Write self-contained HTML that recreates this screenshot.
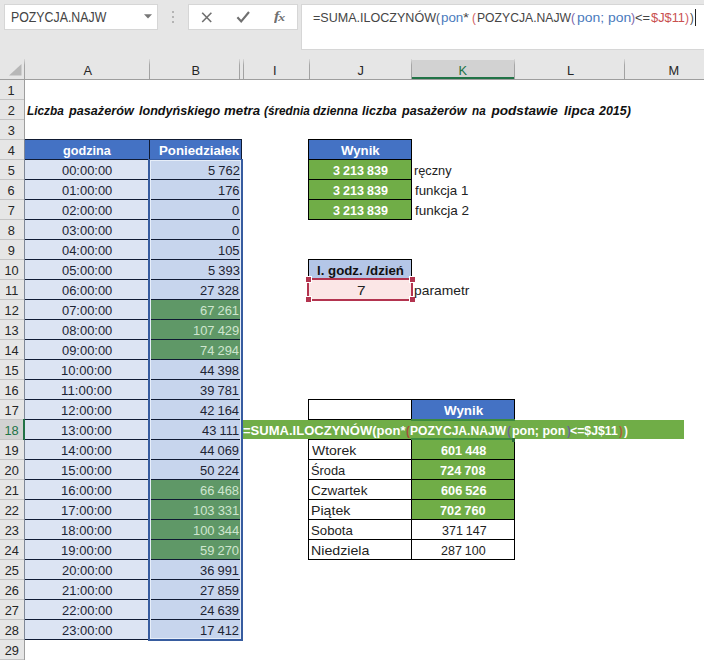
<!DOCTYPE html>
<html><head><meta charset="utf-8"><title>sheet</title>
<style>
*{box-sizing:border-box;margin:0;padding:0}
html,body{width:704px;height:660px;overflow:hidden;background:#fff}
body{font-family:"Liberation Sans",sans-serif;font-size:13px;color:#222;position:relative}
div{position:absolute;white-space:nowrap}
.top{left:0;top:0;width:704px;height:80px;background:#e6e6e6}
.box{background:#fff;border:1px solid #d6d6d6}
.hline{background:#9e9e9e;height:1px}
.vsep{background:linear-gradient(#d8d8d8,#a6a6a6 30%,#a0a0a0);width:1px;top:59px;height:20px}
.rh{left:0;width:24px;height:20px;line-height:21px;text-align:center;font-size:12.5px;color:#262626;background:#e6e6e6;border-bottom:1px solid #c4c4c4}
</style></head>
<body>
<div class="top"></div>
<div class="box" style="left:4px;top:4px;width:154px;height:26px"></div>
<div style="left:10.69px;top:8px;height:20px;line-height:20px;font-size:13.8px;color:#444;transform:translateY(0.20px) scaleX(0.8946);transform-origin:0 0;">POZYCJA.NAJW</div>
<svg style="position:absolute;left:144px;top:14px" width="8" height="5" viewBox="0 0 8 5"><path d="M0 0.3h8L4 4.6z" fill="#777"/></svg>
<div style="left:172px;top:11px;width:2px;height:2px;background:#b4b4b4"></div>
<div style="left:172px;top:16px;width:2px;height:2px;background:#b4b4b4"></div>
<div style="left:172px;top:21px;width:2px;height:2px;background:#b4b4b4"></div>
<div class="box" style="left:188px;top:4px;width:110px;height:26px"></div>
<svg style="position:absolute;left:200px;top:11px" width="14" height="13" viewBox="0 0 14 13"><path d="M2.2 1.7l9 9.3M11.4 1.7l-9.2 9.3" stroke="#707070" stroke-width="1.6" fill="none"/></svg>
<svg style="position:absolute;left:236px;top:10px" width="15" height="14" viewBox="0 0 15 14"><path d="M1.4 7.2l3.8 4.3L13 2" stroke="#707070" stroke-width="2.1" fill="none"/></svg>
<div style="left:273.5px;top:4.6px;height:22px;line-height:22px;font-family:'Liberation Serif',serif;font-style:italic;font-weight:bold;font-size:13px;color:#707070;transform:scaleX(1.25);transform-origin:0 0">f<span style="font-size:11px;position:relative;top:1px;left:-1px">x</span></div>
<div class="box" style="left:301px;top:4px;width:410px;height:46px"></div>
<div style="left:312.70px;top:8px;height:20px;line-height:20px;font-size:13.1px;color:#454545;transform:translateY(0.10px) scaleX(0.9581);transform-origin:0 0;">=SUMA.ILOCZYNÓW</div>
<div style="left:436.18px;top:8px;height:20px;line-height:20px;font-size:13.1px;color:#3d4f6e;transform:translateY(0.10px) scaleX(0.8896);transform-origin:0 0;">(</div>
<div style="left:441.34px;top:8px;height:20px;line-height:20px;font-size:13.1px;color:#4a7bbd;transform:translateY(0.10px) scaleX(1.0211);transform-origin:0 0;">pon</div>
<div style="left:463.15px;top:8px;height:20px;line-height:20px;font-size:13.1px;color:#454545;transform:translateY(0.10px) scaleX(1.1728);transform-origin:0 0;">*</div>
<div style="left:471.68px;top:8px;height:20px;line-height:20px;font-size:13.1px;color:#cf5a60;transform:translateY(0.10px) scaleX(0.8896);transform-origin:0 0;">(</div>
<div style="left:477.00px;top:8px;height:20px;line-height:20px;font-size:13.1px;color:#454545;transform:translateY(0.10px) scaleX(0.9295);transform-origin:0 0;">POZYCJA.NAJW</div>
<div style="left:571.49px;top:8px;height:20px;line-height:20px;font-size:13.1px;color:#7d62a8;transform:translateY(0.10px) scaleX(0.9327);transform-origin:0 0;">(</div>
<div style="left:576.61px;top:8px;height:20px;line-height:20px;font-size:13.1px;color:#4a7bbd;transform:translateY(0.10px) scaleX(1.0647);transform-origin:0 0;">pon; pon</div>
<div style="left:631.19px;top:8px;height:20px;line-height:20px;font-size:13.1px;color:#7d62a8;transform:translateY(0.10px) scaleX(0.9327);transform-origin:0 0;">)</div>
<div style="left:635.37px;top:8px;height:20px;line-height:20px;font-size:13.1px;color:#454545;transform:translateY(0.10px) scaleX(0.9810);transform-origin:0 0;">&lt;=</div>
<div style="left:650.87px;top:8px;height:20px;line-height:20px;font-size:13.1px;color:#c9504f;transform:translateY(0.10px) scaleX(0.9792);transform-origin:0 0;">$J$11</div>
<div style="left:685.44px;top:8px;height:20px;line-height:20px;font-size:13.1px;color:#cf5a60;transform:translateY(0.10px) scaleX(0.9327);transform-origin:0 0;">)</div>
<div style="left:689.94px;top:8px;height:20px;line-height:20px;font-size:13.1px;color:#454545;transform:translateY(0.10px) scaleX(0.8609);transform-origin:0 0;">)</div>
<div style="left:694.5px;top:9px;width:1px;height:17px;background:#222"></div>
<div style="left:411px;top:60px;width:104px;height:19px;background:#d2d2d2"></div>
<div style="left:411px;top:77px;width:104px;height:2px;background:#217346"></div>
<div style="left:83.53px;top:61px;height:20px;line-height:20px;font-size:12.8px;color:#262626;transform:translateY(0.30px) scaleX(1.0000);transform-origin:0 0;">A</div>
<div style="left:191.54px;top:61px;height:20px;line-height:20px;font-size:12.8px;color:#262626;transform:translateY(0.30px) scaleX(1.0000);transform-origin:0 0;">B</div>
<div style="left:273.02px;top:61px;height:20px;line-height:20px;font-size:12.8px;color:#262626;transform:translateY(0.30px) scaleX(1.0000);transform-origin:0 0;">I</div>
<div style="left:357.43px;top:61px;height:20px;line-height:20px;font-size:12.8px;color:#262626;transform:translateY(0.30px) scaleX(1.0000);transform-origin:0 0;">J</div>
<div style="left:458.53px;top:61px;height:20px;line-height:20px;font-size:12.8px;color:#217346;transform:translateY(0.30px) scaleX(1.0000);transform-origin:0 0;">K</div>
<div style="left:566.88px;top:61px;height:20px;line-height:20px;font-size:12.8px;color:#262626;transform:translateY(0.30px) scaleX(1.0000);transform-origin:0 0;">L</div>
<div style="left:668.57px;top:61px;height:20px;line-height:20px;font-size:12.8px;color:#262626;transform:translateY(0.30px) scaleX(1.0000);transform-origin:0 0;">M</div>
<div class="vsep" style="left:24px"></div>
<div class="vsep" style="left:149px"></div>
<div class="vsep" style="left:239px"></div>
<div class="vsep" style="left:243px"></div>
<div class="vsep" style="left:309px"></div>
<div class="vsep" style="left:411px"></div>
<div class="vsep" style="left:514px"></div>
<div class="vsep" style="left:624px"></div>
<div class="hline" style="left:0;top:79px;width:704px"></div>
<svg style="position:absolute;left:9px;top:64px" width="13" height="12" viewBox="0 0 13 12"><path d="M12.5 0v11.5H0z" fill="#b7b7b7"/></svg>
<div class="rh" style="top:80px"></div>
<div style="left:7.46px;top:80px;height:20px;line-height:20px;font-size:12.8px;color:#262626;transform:translateY(0.60px) scaleX(1.0000);transform-origin:0 0;">1</div>
<div class="rh" style="top:100px"></div>
<div style="left:7.64px;top:100px;height:20px;line-height:20px;font-size:12.8px;color:#262626;transform:translateY(0.60px) scaleX(1.0000);transform-origin:0 0;">2</div>
<div class="rh" style="top:120px"></div>
<div style="left:7.67px;top:120px;height:20px;line-height:20px;font-size:12.8px;color:#262626;transform:translateY(0.60px) scaleX(1.0000);transform-origin:0 0;">3</div>
<div class="rh" style="top:140px"></div>
<div style="left:7.69px;top:140px;height:20px;line-height:20px;font-size:12.8px;color:#262626;transform:translateY(0.60px) scaleX(1.0000);transform-origin:0 0;">4</div>
<div class="rh" style="top:160px"></div>
<div style="left:7.65px;top:160px;height:20px;line-height:20px;font-size:12.8px;color:#262626;transform:translateY(0.60px) scaleX(1.0000);transform-origin:0 0;">5</div>
<div class="rh" style="top:180px"></div>
<div style="left:7.60px;top:180px;height:20px;line-height:20px;font-size:12.8px;color:#262626;transform:translateY(0.60px) scaleX(1.0000);transform-origin:0 0;">6</div>
<div class="rh" style="top:200px"></div>
<div style="left:7.64px;top:200px;height:20px;line-height:20px;font-size:12.8px;color:#262626;transform:translateY(0.60px) scaleX(1.0000);transform-origin:0 0;">7</div>
<div class="rh" style="top:220px"></div>
<div style="left:7.64px;top:220px;height:20px;line-height:20px;font-size:12.8px;color:#262626;transform:translateY(0.60px) scaleX(1.0000);transform-origin:0 0;">8</div>
<div class="rh" style="top:240px"></div>
<div style="left:7.65px;top:240px;height:20px;line-height:20px;font-size:12.8px;color:#262626;transform:translateY(0.60px) scaleX(1.0000);transform-origin:0 0;">9</div>
<div class="rh" style="top:260px"></div>
<div style="left:4.44px;top:260px;height:20px;line-height:20px;font-size:12.8px;color:#262626;transform:translateY(0.60px) scaleX(1.0000);transform-origin:0 0;">10</div>
<div class="rh" style="top:280px"></div>
<div style="left:4.98px;top:280px;height:20px;line-height:20px;font-size:12.8px;color:#262626;transform:translateY(0.60px) scaleX(1.0000);transform-origin:0 0;">11</div>
<div class="rh" style="top:300px"></div>
<div style="left:4.52px;top:300px;height:20px;line-height:20px;font-size:12.8px;color:#262626;transform:translateY(0.60px) scaleX(1.0000);transform-origin:0 0;">12</div>
<div class="rh" style="top:320px"></div>
<div style="left:4.47px;top:320px;height:20px;line-height:20px;font-size:12.8px;color:#262626;transform:translateY(0.60px) scaleX(1.0000);transform-origin:0 0;">13</div>
<div class="rh" style="top:340px"></div>
<div style="left:4.38px;top:340px;height:20px;line-height:20px;font-size:12.8px;color:#262626;transform:translateY(0.60px) scaleX(1.0000);transform-origin:0 0;">14</div>
<div class="rh" style="top:360px"></div>
<div style="left:4.46px;top:360px;height:20px;line-height:20px;font-size:12.8px;color:#262626;transform:translateY(0.60px) scaleX(1.0000);transform-origin:0 0;">15</div>
<div class="rh" style="top:380px"></div>
<div style="left:4.47px;top:380px;height:20px;line-height:20px;font-size:12.8px;color:#262626;transform:translateY(0.60px) scaleX(1.0000);transform-origin:0 0;">16</div>
<div class="rh" style="top:400px"></div>
<div style="left:4.52px;top:400px;height:20px;line-height:20px;font-size:12.8px;color:#262626;transform:translateY(0.60px) scaleX(1.0000);transform-origin:0 0;">17</div>
<div class="rh" style="top:420px;background:#d2d2d2"></div>
<div style="left:4.47px;top:420px;height:20px;line-height:20px;font-size:12.8px;color:#217346;transform:translateY(0.60px) scaleX(1.0000);transform-origin:0 0;">18</div>
<div class="rh" style="top:440px"></div>
<div style="left:4.50px;top:440px;height:20px;line-height:20px;font-size:12.8px;color:#262626;transform:translateY(0.60px) scaleX(1.0000);transform-origin:0 0;">19</div>
<div class="rh" style="top:460px"></div>
<div style="left:4.61px;top:460px;height:20px;line-height:20px;font-size:12.8px;color:#262626;transform:translateY(0.60px) scaleX(1.0000);transform-origin:0 0;">20</div>
<div class="rh" style="top:480px"></div>
<div style="left:4.67px;top:480px;height:20px;line-height:20px;font-size:12.8px;color:#262626;transform:translateY(0.60px) scaleX(1.0000);transform-origin:0 0;">21</div>
<div class="rh" style="top:500px"></div>
<div style="left:4.68px;top:500px;height:20px;line-height:20px;font-size:12.8px;color:#262626;transform:translateY(0.60px) scaleX(1.0000);transform-origin:0 0;">22</div>
<div class="rh" style="top:520px"></div>
<div style="left:4.64px;top:520px;height:20px;line-height:20px;font-size:12.8px;color:#262626;transform:translateY(0.60px) scaleX(1.0000);transform-origin:0 0;">23</div>
<div class="rh" style="top:540px"></div>
<div style="left:4.55px;top:540px;height:20px;line-height:20px;font-size:12.8px;color:#262626;transform:translateY(0.60px) scaleX(1.0000);transform-origin:0 0;">24</div>
<div class="rh" style="top:560px"></div>
<div style="left:4.63px;top:560px;height:20px;line-height:20px;font-size:12.8px;color:#262626;transform:translateY(0.60px) scaleX(1.0000);transform-origin:0 0;">25</div>
<div class="rh" style="top:580px"></div>
<div style="left:4.64px;top:580px;height:20px;line-height:20px;font-size:12.8px;color:#262626;transform:translateY(0.60px) scaleX(1.0000);transform-origin:0 0;">26</div>
<div class="rh" style="top:600px"></div>
<div style="left:4.68px;top:600px;height:20px;line-height:20px;font-size:12.8px;color:#262626;transform:translateY(0.60px) scaleX(1.0000);transform-origin:0 0;">27</div>
<div class="rh" style="top:620px"></div>
<div style="left:4.64px;top:620px;height:20px;line-height:20px;font-size:12.8px;color:#262626;transform:translateY(0.60px) scaleX(1.0000);transform-origin:0 0;">28</div>
<div class="rh" style="top:640px"></div>
<div style="left:4.66px;top:640px;height:20px;line-height:20px;font-size:12.8px;color:#262626;transform:translateY(0.60px) scaleX(1.0000);transform-origin:0 0;">29</div>
<div style="left:24px;top:80px;width:1px;height:580px;background:#9e9e9e"></div>
<div style="left:27.30px;top:100px;height:20px;line-height:20px;font-size:13.6px;font-weight:bold;font-style:italic;color:#111;transform:translateY(0.90px) scaleX(0.8694);transform-origin:0 0;">Liczba</div>
<div style="left:69.03px;top:100px;height:20px;line-height:20px;font-size:13.6px;font-weight:bold;font-style:italic;color:#111;transform:translateY(0.90px) scaleX(0.9317);transform-origin:0 0;">pasażerów</div>
<div style="left:139.29px;top:100px;height:20px;line-height:20px;font-size:13.6px;font-weight:bold;font-style:italic;color:#111;transform:translateY(0.90px) scaleX(0.9253);transform-origin:0 0;">londyńskiego</div>
<div style="left:224.27px;top:100px;height:20px;line-height:20px;font-size:13.6px;font-weight:bold;font-style:italic;color:#111;transform:translateY(0.90px) scaleX(0.9751);transform-origin:0 0;">metra</div>
<div style="left:263.58px;top:100px;height:20px;line-height:20px;font-size:13.6px;font-weight:bold;font-style:italic;color:#111;transform:translateY(0.90px) scaleX(0.8651);transform-origin:0 0;">(średnia</div>
<div style="left:312.66px;top:100px;height:20px;line-height:20px;font-size:13.6px;font-weight:bold;font-style:italic;color:#111;transform:translateY(0.90px) scaleX(0.8875);transform-origin:0 0;">dzienna</div>
<div style="left:362.04px;top:100px;height:20px;line-height:20px;font-size:13.6px;font-weight:bold;font-style:italic;color:#111;transform:translateY(0.90px) scaleX(0.9215);transform-origin:0 0;">liczba</div>
<div style="left:402.28px;top:100px;height:20px;line-height:20px;font-size:13.6px;font-weight:bold;font-style:italic;color:#111;transform:translateY(0.90px) scaleX(0.9282);transform-origin:0 0;">pasażerów</div>
<div style="left:472.12px;top:100px;height:20px;line-height:20px;font-size:13.6px;font-weight:bold;font-style:italic;color:#111;transform:translateY(0.90px) scaleX(0.8600);transform-origin:0 0;">na</div>
<div style="left:491.46px;top:100px;height:20px;line-height:20px;font-size:13.6px;font-weight:bold;font-style:italic;color:#111;transform:translateY(0.90px) scaleX(1.0000);transform-origin:0 0;">podstawie</div>
<div style="left:564.27px;top:100px;height:20px;line-height:20px;font-size:13.6px;font-weight:bold;font-style:italic;color:#111;transform:translateY(0.90px) scaleX(0.9879);transform-origin:0 0;">lipca</div>
<div style="left:598.95px;top:100px;height:20px;line-height:20px;font-size:13.6px;font-weight:bold;font-style:italic;color:#111;transform:translateY(0.90px) scaleX(0.9173);transform-origin:0 0;">2015)</div>
<div style="left:25px;top:139px;width:217px;height:21px;background:#0f1a33"></div>
<div style="left:25px;top:140px;width:124px;height:19px;background:#4472c4"></div>
<div style="left:150px;top:140px;width:91px;height:19px;background:#4472c4"></div>
<div style="left:25px;top:160px;width:124px;height:480px;background:#dce4f3"></div>
<div style="left:25px;top:179px;width:124px;height:1px;background:#0f1a33"></div>
<div style="left:25px;top:199px;width:124px;height:1px;background:#0f1a33"></div>
<div style="left:25px;top:219px;width:124px;height:1px;background:#0f1a33"></div>
<div style="left:25px;top:239px;width:124px;height:1px;background:#0f1a33"></div>
<div style="left:25px;top:259px;width:124px;height:1px;background:#0f1a33"></div>
<div style="left:25px;top:279px;width:124px;height:1px;background:#0f1a33"></div>
<div style="left:25px;top:299px;width:124px;height:1px;background:#0f1a33"></div>
<div style="left:25px;top:319px;width:124px;height:1px;background:#0f1a33"></div>
<div style="left:25px;top:339px;width:124px;height:1px;background:#0f1a33"></div>
<div style="left:25px;top:359px;width:124px;height:1px;background:#0f1a33"></div>
<div style="left:25px;top:379px;width:124px;height:1px;background:#0f1a33"></div>
<div style="left:25px;top:399px;width:124px;height:1px;background:#0f1a33"></div>
<div style="left:25px;top:419px;width:124px;height:1px;background:#0f1a33"></div>
<div style="left:25px;top:439px;width:124px;height:1px;background:#0f1a33"></div>
<div style="left:25px;top:459px;width:124px;height:1px;background:#0f1a33"></div>
<div style="left:25px;top:479px;width:124px;height:1px;background:#0f1a33"></div>
<div style="left:25px;top:499px;width:124px;height:1px;background:#0f1a33"></div>
<div style="left:25px;top:519px;width:124px;height:1px;background:#0f1a33"></div>
<div style="left:25px;top:539px;width:124px;height:1px;background:#0f1a33"></div>
<div style="left:25px;top:559px;width:124px;height:1px;background:#0f1a33"></div>
<div style="left:25px;top:579px;width:124px;height:1px;background:#0f1a33"></div>
<div style="left:25px;top:599px;width:124px;height:1px;background:#0f1a33"></div>
<div style="left:25px;top:619px;width:124px;height:1px;background:#0f1a33"></div>
<div style="left:25px;top:639px;width:124px;height:1px;background:#0f1a33"></div>
<div style="left:148px;top:159px;width:95px;height:482px;background:#375c9f"></div>
<div style="left:150px;top:160px;width:91px;height:479px;background:#e6edf8"></div>
<div style="left:151px;top:161px;width:89px;height:477px;background:#c7d5ed"></div>
<div style="left:151px;top:480px;width:89px;height:19px;background:#5f9867"></div>
<div style="left:151px;top:500px;width:89px;height:19px;background:#5f9867"></div>
<div style="left:151px;top:520px;width:89px;height:19px;background:#5f9867"></div>
<div style="left:151px;top:540px;width:89px;height:19px;background:#5f9867"></div>
<div style="left:151px;top:300px;width:89px;height:19px;background:#5f9867"></div>
<div style="left:151px;top:320px;width:89px;height:19px;background:#5f9867"></div>
<div style="left:151px;top:340px;width:89px;height:19px;background:#5f9867"></div>
<div style="left:151px;top:179px;width:89px;height:1px;background:#0f1a33"></div>
<div style="left:151px;top:199px;width:89px;height:1px;background:#0f1a33"></div>
<div style="left:151px;top:219px;width:89px;height:1px;background:#0f1a33"></div>
<div style="left:151px;top:239px;width:89px;height:1px;background:#0f1a33"></div>
<div style="left:151px;top:259px;width:89px;height:1px;background:#0f1a33"></div>
<div style="left:151px;top:279px;width:89px;height:1px;background:#0f1a33"></div>
<div style="left:151px;top:299px;width:89px;height:1px;background:#0f1a33"></div>
<div style="left:151px;top:319px;width:89px;height:1px;background:#0f1a33"></div>
<div style="left:151px;top:339px;width:89px;height:1px;background:#0f1a33"></div>
<div style="left:151px;top:359px;width:89px;height:1px;background:#0f1a33"></div>
<div style="left:151px;top:379px;width:89px;height:1px;background:#0f1a33"></div>
<div style="left:151px;top:399px;width:89px;height:1px;background:#0f1a33"></div>
<div style="left:151px;top:419px;width:89px;height:1px;background:#0f1a33"></div>
<div style="left:151px;top:439px;width:89px;height:1px;background:#0f1a33"></div>
<div style="left:151px;top:459px;width:89px;height:1px;background:#0f1a33"></div>
<div style="left:151px;top:479px;width:89px;height:1px;background:#0f1a33"></div>
<div style="left:151px;top:499px;width:89px;height:1px;background:#0f1a33"></div>
<div style="left:151px;top:519px;width:89px;height:1px;background:#0f1a33"></div>
<div style="left:151px;top:539px;width:89px;height:1px;background:#0f1a33"></div>
<div style="left:151px;top:559px;width:89px;height:1px;background:#0f1a33"></div>
<div style="left:151px;top:579px;width:89px;height:1px;background:#0f1a33"></div>
<div style="left:151px;top:599px;width:89px;height:1px;background:#0f1a33"></div>
<div style="left:151px;top:619px;width:89px;height:1px;background:#0f1a33"></div>
<div style="left:24px;top:139px;width:1px;height:501px;background:#7f8796"></div>
<div style="left:62.88px;top:140px;height:20px;line-height:20px;font-size:13.6px;font-weight:bold;color:#fff;transform:translateY(0.80px) scaleX(0.9311);transform-origin:0 0;">godzina</div>
<div style="left:158.73px;top:140px;height:20px;line-height:20px;font-size:13.6px;font-weight:bold;color:#fff;transform:translateY(0.80px) scaleX(0.9742);transform-origin:0 0;">Poniedziałek</div>
<div style="left:61.80px;top:160px;height:20px;line-height:20px;font-size:13.4px;color:#1e2433;transform:translateY(0.70px) scaleX(0.9644);transform-origin:0 0;">00:00:00</div>
<div style="left:207.68px;top:160px;height:20px;line-height:20px;font-size:13.4px;color:#1e2433;transform:translateY(0.80px) scaleX(0.9650);transform-origin:0 0;word-spacing:-0.5px;">5 762</div>
<div style="left:61.80px;top:180px;height:20px;line-height:20px;font-size:13.4px;color:#1e2433;transform:translateY(0.70px) scaleX(0.9644);transform-origin:0 0;">01:00:00</div>
<div style="left:217.89px;top:180px;height:20px;line-height:20px;font-size:13.4px;color:#1e2433;transform:translateY(0.80px) scaleX(0.9650);transform-origin:0 0;word-spacing:-0.5px;">176</div>
<div style="left:61.80px;top:200px;height:20px;line-height:20px;font-size:13.4px;color:#1e2433;transform:translateY(0.70px) scaleX(0.9644);transform-origin:0 0;">02:00:00</div>
<div style="left:232.20px;top:200px;height:20px;line-height:20px;font-size:13.4px;color:#1e2433;transform:translateY(0.80px) scaleX(0.9650);transform-origin:0 0;word-spacing:-0.5px;">0</div>
<div style="left:61.80px;top:220px;height:20px;line-height:20px;font-size:13.4px;color:#1e2433;transform:translateY(0.70px) scaleX(0.9644);transform-origin:0 0;">03:00:00</div>
<div style="left:232.20px;top:220px;height:20px;line-height:20px;font-size:13.4px;color:#1e2433;transform:translateY(0.80px) scaleX(0.9650);transform-origin:0 0;word-spacing:-0.5px;">0</div>
<div style="left:61.80px;top:240px;height:20px;line-height:20px;font-size:13.4px;color:#1e2433;transform:translateY(0.70px) scaleX(0.9644);transform-origin:0 0;">04:00:00</div>
<div style="left:217.86px;top:240px;height:20px;line-height:20px;font-size:13.4px;color:#1e2433;transform:translateY(0.80px) scaleX(0.9650);transform-origin:0 0;word-spacing:-0.5px;">105</div>
<div style="left:61.80px;top:260px;height:20px;line-height:20px;font-size:13.4px;color:#1e2433;transform:translateY(0.70px) scaleX(0.9644);transform-origin:0 0;">05:00:00</div>
<div style="left:207.59px;top:260px;height:20px;line-height:20px;font-size:13.4px;color:#1e2433;transform:translateY(0.80px) scaleX(0.9650);transform-origin:0 0;word-spacing:-0.5px;">5 393</div>
<div style="left:61.80px;top:280px;height:20px;line-height:20px;font-size:13.4px;color:#1e2433;transform:translateY(0.70px) scaleX(0.9644);transform-origin:0 0;">06:00:00</div>
<div style="left:200.40px;top:280px;height:20px;line-height:20px;font-size:13.4px;color:#1e2433;transform:translateY(0.80px) scaleX(0.9650);transform-origin:0 0;word-spacing:-0.5px;">27 328</div>
<div style="left:61.80px;top:300px;height:20px;line-height:20px;font-size:13.4px;color:#1e2433;transform:translateY(0.70px) scaleX(0.9644);transform-origin:0 0;">07:00:00</div>
<div style="left:200.46px;top:300px;height:20px;line-height:20px;font-size:13.4px;color:#cfe6cf;transform:translateY(0.80px) scaleX(0.9650);transform-origin:0 0;word-spacing:-0.5px;">67 261</div>
<div style="left:61.80px;top:320px;height:20px;line-height:20px;font-size:13.4px;color:#1e2433;transform:translateY(0.70px) scaleX(0.9644);transform-origin:0 0;">08:00:00</div>
<div style="left:193.24px;top:320px;height:20px;line-height:20px;font-size:13.4px;color:#cfe6cf;transform:translateY(0.80px) scaleX(0.9650);transform-origin:0 0;word-spacing:-0.5px;">107 429</div>
<div style="left:61.80px;top:340px;height:20px;line-height:20px;font-size:13.4px;color:#1e2433;transform:translateY(0.70px) scaleX(0.9644);transform-origin:0 0;">09:00:00</div>
<div style="left:200.21px;top:340px;height:20px;line-height:20px;font-size:13.4px;color:#cfe6cf;transform:translateY(0.80px) scaleX(0.9650);transform-origin:0 0;word-spacing:-0.5px;">74 294</div>
<div style="left:61.31px;top:360px;height:20px;line-height:20px;font-size:13.4px;color:#1e2433;transform:translateY(0.70px) scaleX(0.9738);transform-origin:0 0;">10:00:00</div>
<div style="left:200.40px;top:360px;height:20px;line-height:20px;font-size:13.4px;color:#1e2433;transform:translateY(0.80px) scaleX(0.9650);transform-origin:0 0;word-spacing:-0.5px;">44 398</div>
<div style="left:61.29px;top:380px;height:20px;line-height:20px;font-size:13.4px;color:#1e2433;transform:translateY(0.70px) scaleX(0.9933);transform-origin:0 0;">11:00:00</div>
<div style="left:200.46px;top:380px;height:20px;line-height:20px;font-size:13.4px;color:#1e2433;transform:translateY(0.80px) scaleX(0.9650);transform-origin:0 0;word-spacing:-0.5px;">39 781</div>
<div style="left:61.31px;top:400px;height:20px;line-height:20px;font-size:13.4px;color:#1e2433;transform:translateY(0.70px) scaleX(0.9738);transform-origin:0 0;">12:00:00</div>
<div style="left:200.21px;top:400px;height:20px;line-height:20px;font-size:13.4px;color:#1e2433;transform:translateY(0.80px) scaleX(0.9650);transform-origin:0 0;word-spacing:-0.5px;">42 164</div>
<div style="left:61.31px;top:420px;height:20px;line-height:20px;font-size:13.4px;color:#1e2433;transform:translateY(0.70px) scaleX(0.9738);transform-origin:0 0;">13:00:00</div>
<div style="left:202.37px;top:420px;height:20px;line-height:20px;font-size:13.4px;color:#1e2433;transform:translateY(0.80px) scaleX(0.9650);transform-origin:0 0;word-spacing:-0.5px;">43 111</div>
<div style="left:61.31px;top:440px;height:20px;line-height:20px;font-size:13.4px;color:#1e2433;transform:translateY(0.70px) scaleX(0.9738);transform-origin:0 0;">14:00:00</div>
<div style="left:200.45px;top:440px;height:20px;line-height:20px;font-size:13.4px;color:#1e2433;transform:translateY(0.80px) scaleX(0.9650);transform-origin:0 0;word-spacing:-0.5px;">44 069</div>
<div style="left:61.31px;top:460px;height:20px;line-height:20px;font-size:13.4px;color:#1e2433;transform:translateY(0.70px) scaleX(0.9738);transform-origin:0 0;">15:00:00</div>
<div style="left:200.21px;top:460px;height:20px;line-height:20px;font-size:13.4px;color:#1e2433;transform:translateY(0.80px) scaleX(0.9650);transform-origin:0 0;word-spacing:-0.5px;">50 224</div>
<div style="left:61.31px;top:480px;height:20px;line-height:20px;font-size:13.4px;color:#1e2433;transform:translateY(0.70px) scaleX(0.9738);transform-origin:0 0;">16:00:00</div>
<div style="left:200.40px;top:480px;height:20px;line-height:20px;font-size:13.4px;color:#cfe6cf;transform:translateY(0.80px) scaleX(0.9650);transform-origin:0 0;word-spacing:-0.5px;">66 468</div>
<div style="left:61.31px;top:500px;height:20px;line-height:20px;font-size:13.4px;color:#1e2433;transform:translateY(0.70px) scaleX(0.9738);transform-origin:0 0;">17:00:00</div>
<div style="left:193.26px;top:500px;height:20px;line-height:20px;font-size:13.4px;color:#cfe6cf;transform:translateY(0.80px) scaleX(0.9650);transform-origin:0 0;word-spacing:-0.5px;">103 331</div>
<div style="left:61.31px;top:520px;height:20px;line-height:20px;font-size:13.4px;color:#1e2433;transform:translateY(0.70px) scaleX(0.9738);transform-origin:0 0;">18:00:00</div>
<div style="left:193.01px;top:520px;height:20px;line-height:20px;font-size:13.4px;color:#cfe6cf;transform:translateY(0.80px) scaleX(0.9650);transform-origin:0 0;word-spacing:-0.5px;">100 344</div>
<div style="left:61.31px;top:540px;height:20px;line-height:20px;font-size:13.4px;color:#1e2433;transform:translateY(0.70px) scaleX(0.9738);transform-origin:0 0;">19:00:00</div>
<div style="left:200.33px;top:540px;height:20px;line-height:20px;font-size:13.4px;color:#cfe6cf;transform:translateY(0.80px) scaleX(0.9650);transform-origin:0 0;word-spacing:-0.5px;">59 270</div>
<div style="left:61.65px;top:560px;height:20px;line-height:20px;font-size:13.4px;color:#1e2433;transform:translateY(0.70px) scaleX(0.9672);transform-origin:0 0;">20:00:00</div>
<div style="left:200.46px;top:560px;height:20px;line-height:20px;font-size:13.4px;color:#1e2433;transform:translateY(0.80px) scaleX(0.9650);transform-origin:0 0;word-spacing:-0.5px;">36 991</div>
<div style="left:61.65px;top:580px;height:20px;line-height:20px;font-size:13.4px;color:#1e2433;transform:translateY(0.70px) scaleX(0.9672);transform-origin:0 0;">21:00:00</div>
<div style="left:200.45px;top:580px;height:20px;line-height:20px;font-size:13.4px;color:#1e2433;transform:translateY(0.80px) scaleX(0.9650);transform-origin:0 0;word-spacing:-0.5px;">27 859</div>
<div style="left:61.65px;top:600px;height:20px;line-height:20px;font-size:13.4px;color:#1e2433;transform:translateY(0.70px) scaleX(0.9672);transform-origin:0 0;">22:00:00</div>
<div style="left:200.45px;top:600px;height:20px;line-height:20px;font-size:13.4px;color:#1e2433;transform:translateY(0.80px) scaleX(0.9650);transform-origin:0 0;word-spacing:-0.5px;">24 639</div>
<div style="left:61.65px;top:620px;height:20px;line-height:20px;font-size:13.4px;color:#1e2433;transform:translateY(0.70px) scaleX(0.9672);transform-origin:0 0;">23:00:00</div>
<div style="left:200.49px;top:620px;height:20px;line-height:20px;font-size:13.4px;color:#1e2433;transform:translateY(0.80px) scaleX(0.9650);transform-origin:0 0;word-spacing:-0.5px;">17 412</div>
<div style="left:23px;top:419px;width:2px;height:21px;background:#217346"></div>
<div style="left:308px;top:139px;width:104px;height:81px;background:#000"></div>
<div style="left:309px;top:140px;width:102px;height:19px;background:#4472c4"></div>
<div style="left:340.99px;top:140px;height:20px;line-height:20px;font-size:13.6px;font-weight:bold;color:#fff;transform:translateY(0.80px) scaleX(0.9731);transform-origin:0 0;">Wynik</div>
<div style="left:309px;top:160px;width:102px;height:19px;background:#70ad47"></div>
<div style="left:333.22px;top:161px;height:20px;line-height:20px;font-size:13.4px;font-weight:bold;color:#fff;transform:translateY(0.10px) scaleX(0.9379);transform-origin:0 0;word-spacing:-0.5px;">3 213 839</div>
<div style="left:309px;top:180px;width:102px;height:19px;background:#70ad47"></div>
<div style="left:333.22px;top:181px;height:20px;line-height:20px;font-size:13.4px;font-weight:bold;color:#fff;transform:translateY(0.10px) scaleX(0.9379);transform-origin:0 0;word-spacing:-0.5px;">3 213 839</div>
<div style="left:309px;top:200px;width:102px;height:19px;background:#70ad47"></div>
<div style="left:333.22px;top:201px;height:20px;line-height:20px;font-size:13.4px;font-weight:bold;color:#fff;transform:translateY(0.10px) scaleX(0.9379);transform-origin:0 0;word-spacing:-0.5px;">3 213 839</div>
<div style="left:414.41px;top:161px;height:20px;line-height:20px;font-size:13.6px;color:#222;transform:translateY(0.00px) scaleX(0.9392);transform-origin:0 0;">ręczny</div>
<div style="left:415.06px;top:181px;height:20px;line-height:20px;font-size:13.6px;color:#222;transform:translateY(0.00px) scaleX(0.9798);transform-origin:0 0;">funkcja 1</div>
<div style="left:415.06px;top:201px;height:20px;line-height:20px;font-size:13.6px;color:#222;transform:translateY(0.00px) scaleX(0.9943);transform-origin:0 0;">funkcja 2</div>
<div style="left:308px;top:259px;width:104px;height:21px;background:#000"></div>
<div style="left:309px;top:260px;width:102px;height:20px;background:#b4c6e7"></div>
<div style="left:317.33px;top:261px;height:20px;line-height:20px;font-size:13.6px;font-weight:bold;color:#111;transform:translateY(0.20px) scaleX(0.9758);transform-origin:0 0;">l. godz. /dzień</div>
<div style="left:308px;top:279px;width:104px;height:21px;background:#fbe6e6"></div>
<div style="left:308px;top:278px;width:104px;height:2px;background:#b3344f"></div>
<div style="left:308px;top:299px;width:104px;height:2px;background:#b3344f"></div>
<div style="left:307.4px;top:283px;width:2px;height:13px;background:#b3344f"></div>
<div style="left:411px;top:283px;width:2px;height:13px;background:#b3344f"></div>
<div style="left:305.2px;top:276px;width:7px;height:7px;background:#fff"></div>
<div style="left:306.2px;top:277px;width:5px;height:5px;background:#b3344f"></div>
<div style="left:409px;top:276px;width:7px;height:7px;background:#fff"></div>
<div style="left:410px;top:277px;width:5px;height:5px;background:#b3344f"></div>
<div style="left:305.2px;top:296.4px;width:7px;height:7px;background:#fff"></div>
<div style="left:306.2px;top:297.4px;width:5px;height:5px;background:#b3344f"></div>
<div style="left:409px;top:296.4px;width:7px;height:7px;background:#fff"></div>
<div style="left:410px;top:297.4px;width:5px;height:5px;background:#b3344f"></div>
<div style="left:356.97px;top:280px;height:20px;line-height:20px;font-size:13.4px;color:#222;transform:translateY(0.60px) scaleX(1.1481);transform-origin:0 0;">7</div>
<div style="left:414.36px;top:281px;height:20px;line-height:20px;font-size:13.6px;color:#222;transform:translateY(0.00px) scaleX(1.0173);transform-origin:0 0;">parametr</div>
<div style="left:308px;top:399px;width:207px;height:161px;background:#000"></div>
<div style="left:309px;top:400px;width:102px;height:19px;background:#fff"></div>
<div style="left:412px;top:400px;width:102px;height:19px;background:#4472c4"></div>
<div style="left:443.59px;top:401px;height:20px;line-height:20px;font-size:13.6px;font-weight:bold;color:#fff;transform:translateY(0.00px) scaleX(0.9844);transform-origin:0 0;">Wynik</div>
<div style="left:309px;top:440px;width:102px;height:19px;background:#fff"></div>
<div style="left:311.64px;top:441px;height:20px;line-height:20px;font-size:13.6px;color:#222;transform:translateY(0.00px) scaleX(1.0292);transform-origin:0 0;">Wtorek</div>
<div style="left:412px;top:440px;width:102px;height:19px;background:#70ad47"></div>
<div style="left:440.54px;top:441px;height:20px;line-height:20px;font-size:13.4px;font-weight:bold;color:#fff;transform:translateY(0.00px) scaleX(0.9478);transform-origin:0 0;word-spacing:-0.5px;">601 448</div>
<div style="left:309px;top:460px;width:102px;height:19px;background:#fff"></div>
<div style="left:311.12px;top:461px;height:20px;line-height:20px;font-size:13.6px;color:#222;transform:translateY(0.00px) scaleX(0.9443);transform-origin:0 0;">Środa</div>
<div style="left:412px;top:460px;width:102px;height:19px;background:#70ad47"></div>
<div style="left:440.47px;top:461px;height:20px;line-height:20px;font-size:13.4px;font-weight:bold;color:#fff;transform:translateY(0.00px) scaleX(0.9494);transform-origin:0 0;word-spacing:-0.5px;">724 708</div>
<div style="left:309px;top:480px;width:102px;height:19px;background:#fff"></div>
<div style="left:311.02px;top:481px;height:20px;line-height:20px;font-size:13.6px;color:#222;transform:translateY(0.00px) scaleX(0.9959);transform-origin:0 0;">Czwartek</div>
<div style="left:412px;top:480px;width:102px;height:19px;background:#70ad47"></div>
<div style="left:440.54px;top:481px;height:20px;line-height:20px;font-size:13.4px;font-weight:bold;color:#fff;transform:translateY(0.00px) scaleX(0.9491);transform-origin:0 0;word-spacing:-0.5px;">606 526</div>
<div style="left:309px;top:500px;width:102px;height:19px;background:#fff"></div>
<div style="left:310.54px;top:501px;height:20px;line-height:20px;font-size:13.6px;color:#222;transform:translateY(0.00px) scaleX(1.0434);transform-origin:0 0;">Piątek</div>
<div style="left:412px;top:500px;width:102px;height:19px;background:#70ad47"></div>
<div style="left:440.46px;top:501px;height:20px;line-height:20px;font-size:13.4px;font-weight:bold;color:#fff;transform:translateY(0.00px) scaleX(0.9521);transform-origin:0 0;word-spacing:-0.5px;">702 760</div>
<div style="left:309px;top:520px;width:102px;height:19px;background:#fff"></div>
<div style="left:311.11px;top:521px;height:20px;line-height:20px;font-size:13.6px;color:#222;transform:translateY(0.00px) scaleX(0.9718);transform-origin:0 0;">Sobota</div>
<div style="left:412px;top:520px;width:102px;height:19px;background:#fff"></div>
<div style="left:441.53px;top:521px;height:20px;line-height:20px;font-size:13.4px;color:#222;transform:translateY(0.00px) scaleX(0.9324);transform-origin:0 0;word-spacing:-0.5px;">371 147</div>
<div style="left:309px;top:540px;width:102px;height:19px;background:#fff"></div>
<div style="left:310.53px;top:541px;height:20px;line-height:20px;font-size:13.6px;color:#222;transform:translateY(0.00px) scaleX(1.0449);transform-origin:0 0;">Niedziela</div>
<div style="left:412px;top:540px;width:102px;height:19px;background:#fff"></div>
<div style="left:441.38px;top:541px;height:20px;line-height:20px;font-size:13.4px;color:#222;transform:translateY(0.00px) scaleX(0.9324);transform-origin:0 0;word-spacing:-0.5px;">287 100</div>
<div style="left:243px;top:420px;width:441px;height:19px;background:#70ad47"></div>
<div style="left:411px;top:419px;width:104px;height:2px;background:#3d8a3d"></div>
<div style="left:411px;top:438px;width:104px;height:2px;background:#3d8a3d"></div>
<div style="left:512px;top:438px;width:3px;height:4px;background:#2c6b3a"></div>
<div style="left:242.97px;top:420px;height:20px;line-height:20px;font-size:13.6px;font-weight:bold;color:#fff;transform:translateY(0.70px) scaleX(0.9583);transform-origin:0 0;">=SUMA.ILOCZYNÓW(pon*</div>
<div style="left:406.25px;top:420px;height:20px;line-height:20px;font-size:13.6px;font-weight:bold;color:#a8503c;transform:translateY(0.70px) scaleX(0.8314);transform-origin:0 0;">(</div>
<div style="left:409.90px;top:420px;height:20px;line-height:20px;font-size:13.6px;font-weight:bold;color:#fff;transform:translateY(0.70px) scaleX(0.8894);transform-origin:0 0;">POZYCJA.NAJW</div>
<div style="left:506.85px;top:420px;height:20px;line-height:20px;font-size:13.6px;font-weight:bold;color:#6d6798;transform:translateY(0.70px) scaleX(0.8314);transform-origin:0 0;">(</div>
<div style="left:512.19px;top:420px;height:20px;line-height:20px;font-size:13.6px;font-weight:bold;color:#fff;transform:translateY(0.70px) scaleX(0.9180);transform-origin:0 0;">pon; pon</div>
<div style="left:566.59px;top:420px;height:20px;line-height:20px;font-size:13.6px;font-weight:bold;color:#6d6798;transform:translateY(0.70px) scaleX(0.8314);transform-origin:0 0;">)</div>
<div style="left:570.48px;top:420px;height:20px;line-height:20px;font-size:13.6px;font-weight:bold;color:#fff;transform:translateY(0.70px) scaleX(0.9037);transform-origin:0 0;">&lt;=$J$11</div>
<div style="left:619.09px;top:420px;height:20px;line-height:20px;font-size:13.6px;font-weight:bold;color:#b0603c;transform:translateY(0.70px) scaleX(0.8314);transform-origin:0 0;">)</div>
<div style="left:624.49px;top:420px;height:20px;line-height:20px;font-size:13.6px;font-weight:bold;color:#fff;transform:translateY(0.70px) scaleX(0.8574);transform-origin:0 0;">)</div>
</body></html>
